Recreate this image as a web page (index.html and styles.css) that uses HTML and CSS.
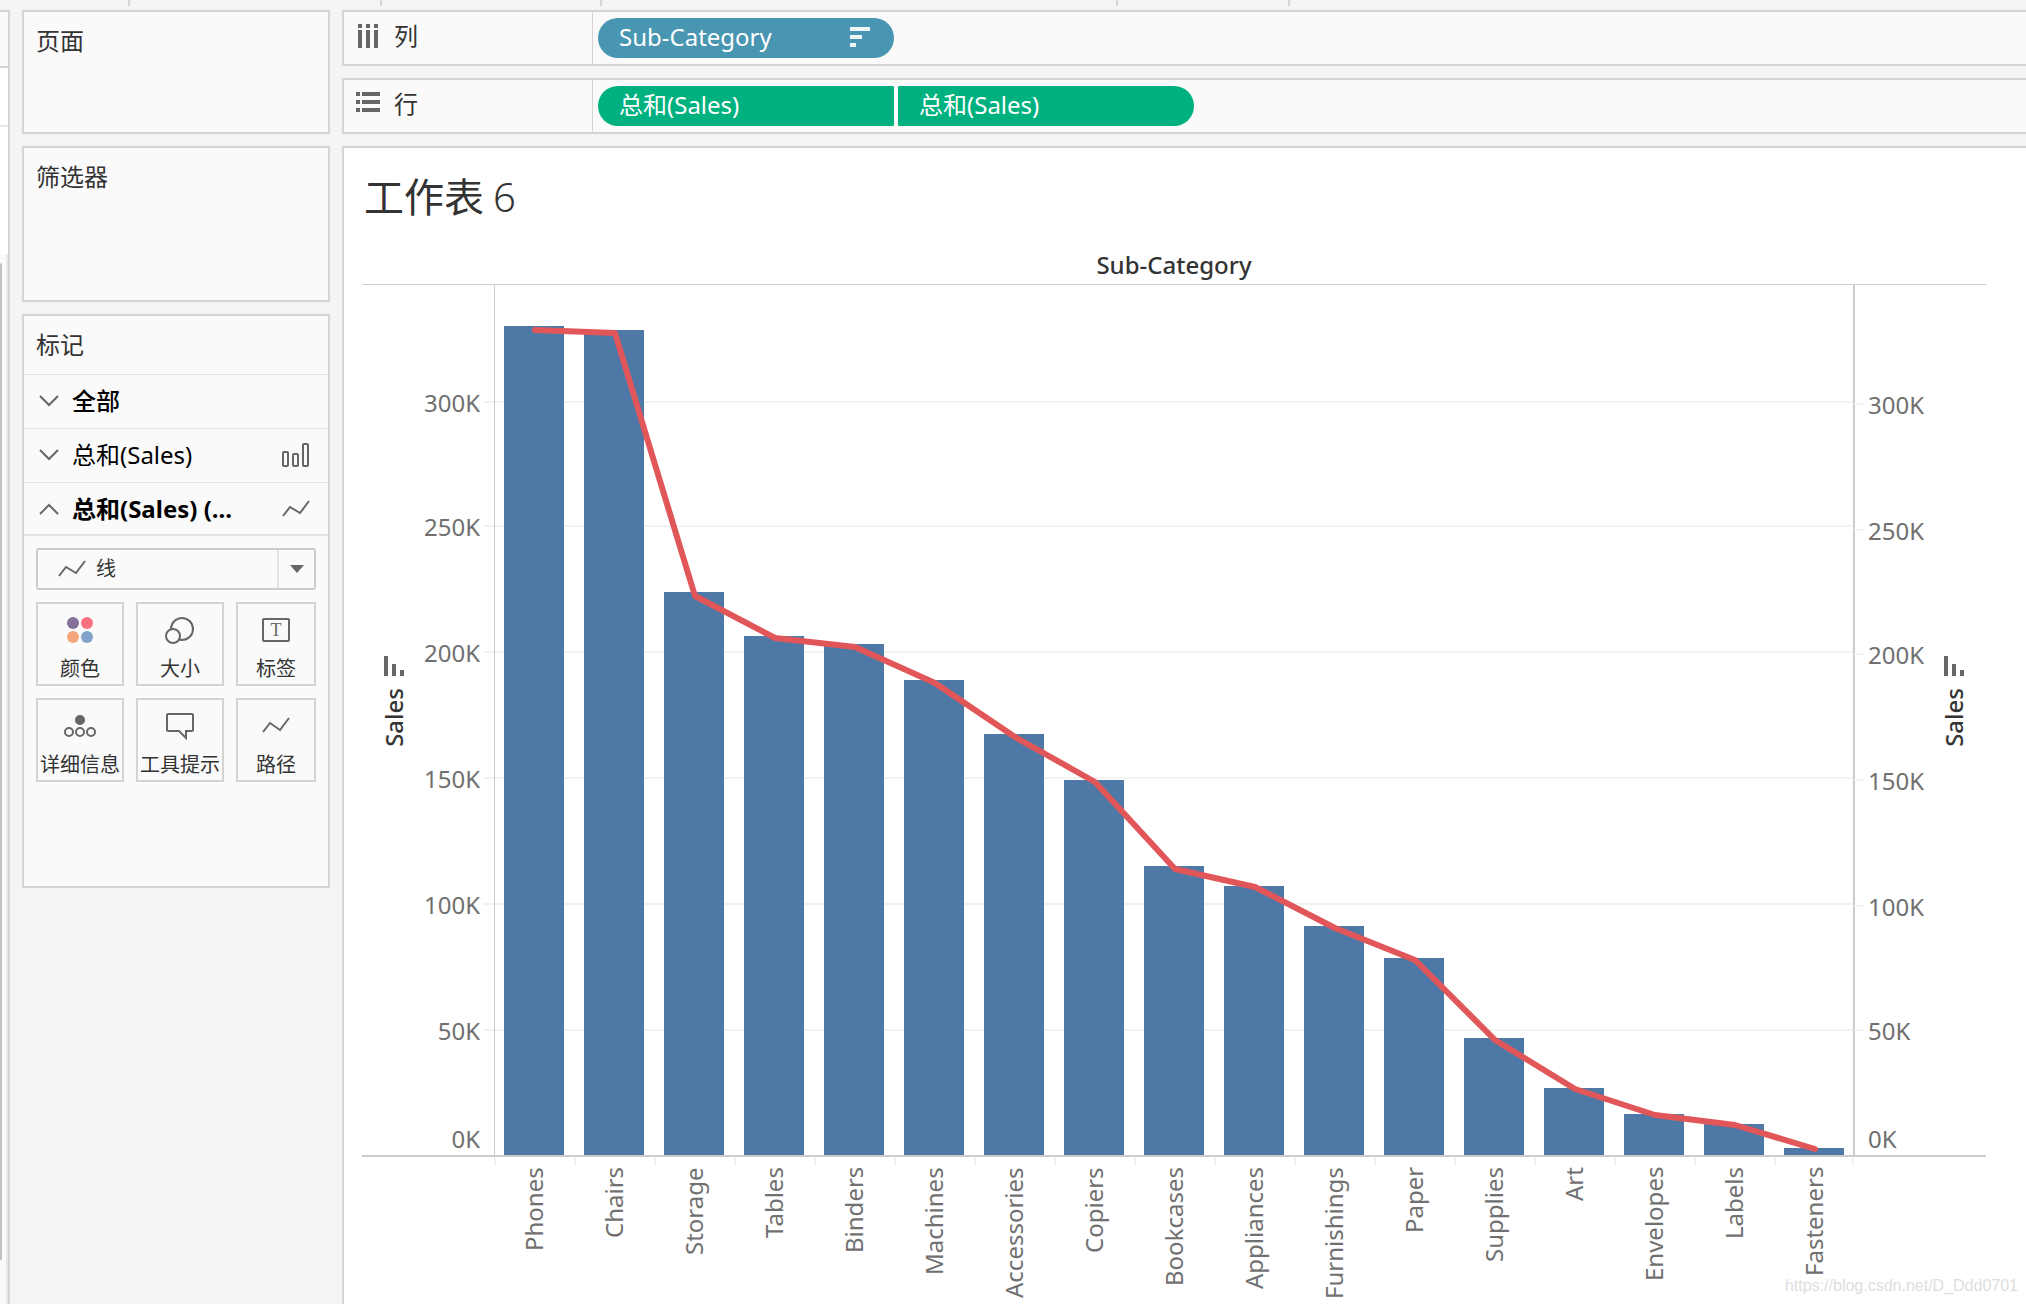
FILE: index.html
```html
<!DOCTYPE html>
<html lang="zh-CN">
<head>
<meta charset="utf-8">
<meta name="viewport" content="width=device-width, initial-scale=1">
<title>工作表 6</title>
<link rel="stylesheet" href="styles.css">
</head>
<body>
<svg class="defs" aria-hidden="true">
  <symbol id="zigzag" viewBox="0 0 28 18"><path d="M1 16 L8 7 L18 13 L27 1" fill="none" stroke="#666" stroke-width="2"/></symbol>
  <symbol id="down" viewBox="0 0 20 12"><path d="M1 1 L10 10 L19 1" fill="none" stroke="#666" stroke-width="2"/></symbol>
  <symbol id="up" viewBox="0 0 20 12"><path d="M1 11 L10 2 L19 11" fill="none" stroke="#666" stroke-width="2"/></symbol>
  <symbol id="sorted" viewBox="0 0 20 20"><path d="M0 0h4v20H0zM8 8h4v12H8zM16 14h4v6h-4z" fill="#666"/></symbol>
</svg>
<div class="app">
  <aside class="rail">
    <div class="rail-head"></div>
    <div class="rail-search"></div>
    <div class="rail-space"></div>
    <div class="rail-scroll"><div class="rail-thumb"></div></div>
  </aside>
  <div class="work">
    <div class="ruler"><i></i><i></i><i></i><i></i><i></i></div>
    <div class="columns">
      <aside class="cards">
        <section class="card pages"><h2>页面</h2></section>
        <section class="card filters"><h2>筛选器</h2></section>
        <section class="card marks">
          <h2>标记</h2>
          <button class="mark-row" type="button"><svg class="chev"><use href="#down"/></svg><span class="mark-name all">全部</span></button>
          <button class="mark-row" type="button"><svg class="chev"><use href="#down"/></svg><span class="mark-name">总和(Sales)</span><svg class="mark-icon" viewBox="0 0 28 24"><g fill="none" stroke="#666" stroke-width="2"><rect x="1" y="9" width="5" height="14" rx="1"/><rect x="11" y="11" width="5" height="12" rx="1"/><rect x="21" y="1" width="5" height="22" rx="1"/></g></svg></button>
          <button class="mark-row open" type="button"><svg class="chev"><use href="#up"/></svg><span class="mark-name bold">总和(Sales) (...</span><svg class="mark-icon zig"><use href="#zigzag"/></svg></button>
          <label class="type">
            <svg class="zig"><use href="#zigzag"/></svg>
            <select aria-label="标记类型"><option>线</option></select>
            <span class="type-arrow"><svg viewBox="0 0 14 8"><path d="M0 0h14L7 8z" fill="#666"/></svg></span>
          </label>
          <div class="tiles">
            <button type="button"><svg viewBox="0 0 32 28"><circle cx="9" cy="7" r="6" fill="#85709a"/><circle cx="23" cy="7" r="6" fill="#f7707f"/><circle cx="9" cy="21" r="6" fill="#f3a67c"/><circle cx="23" cy="21" r="6" fill="#82a4cb"/></svg>颜色</button>
            <button type="button"><svg viewBox="0 0 32 28"><g fill="#fafafa" stroke="#666" stroke-width="2"><circle cx="18" cy="13" r="11"/><circle cx="9" cy="20" r="7"/></g></svg>大小</button>
            <button type="button"><svg viewBox="0 0 32 28"><rect x="3" y="3" width="26" height="22" rx="1" fill="none" stroke="#666" stroke-width="2"/><text class="icon-text" x="16" y="20" text-anchor="middle">T</text></svg>标签</button>
            <button type="button"><svg viewBox="0 0 32 28"><circle cx="16" cy="8" r="5" fill="#666"/><g fill="none" stroke="#666" stroke-width="2"><circle cx="5" cy="20" r="4"/><circle cx="16" cy="20" r="4"/><circle cx="27" cy="20" r="4"/></g></svg>详细信息</button>
            <button type="button"><svg viewBox="0 0 32 28"><path d="M4 2h24q1 0 1 1v15q0 1-1 1h-6v7l-7-7H4q-1 0-1-1V3q0-1 1-1z" fill="none" stroke="#666" stroke-width="2"/></svg>工具提示</button>
            <button type="button"><svg viewBox="0 0 32 28"><path d="M3 20L10 11L20 18L29 6" fill="none" stroke="#666" stroke-width="2"/></svg>路径</button>
          </div>
        </section>
      </aside>
      <main class="main">
        <section class="shelf">
          <h2><svg viewBox="0 0 24 24"><path d="M2 0h4v4H2zM10 0h4v4h-4zM18 0h4v4h-4zM2 6h4v18H2zM10 6h4v18h-4zM18 6h4v18h-4z" fill="#666"/></svg>列</h2>
          <div class="pills">
            <button class="pill dim" type="button">Sub-Category<svg viewBox="0 0 20 20"><path d="M0 0h20v4H0zM0 8h12v4H0zM0 16h6v4H0z" fill="#fff" fill-opacity=".9"/></svg></button>
          </div>
        </section>
        <section class="shelf">
          <h2><svg viewBox="0 0 24 24"><path d="M0 0h4v4H0zM0 8h4v4H0zM0 16h4v4H0zM6 0h18v4H6zM6 8h18v4H6zM6 16h18v4H6z" fill="#666"/></svg>行</h2>
          <div class="pills">
            <button class="pill first" type="button">总和(Sales)</button>
            <button class="pill last" type="button">总和(Sales)</button>
          </div>
        </section>
        <section class="sheet">
          <h1>工作表 <span>6</span></h1>
          <div class="chart">
            <div class="chart-head">Sub-Category</div>
            <div class="axis left">
              <div class="axis-title"><svg><use href="#sorted"/></svg><span>Sales</span></div>
              <ol class="ticks"><li><span>300K</span></li><li><span>250K</span></li><li><span>200K</span></li><li><span>150K</span></li><li><span>100K</span></li><li><span>50K</span></li><li><span>0K</span></li></ol>
            </div>
            <div class="gridlines"><i></i><i></i><i></i><i></i><i></i><i></i></div>
            <div class="bars"></div>
            <svg class="line" viewBox="0 0 1360 870" preserveAspectRatio="none"><polyline points="41,45 121,48 201,311 281,353 361,362 441,398 521,452 601,497 681,584 761,602 841,643 921,675 1001,755 1081,804 1161,830 1241,840 1321,864"/></svg>
            <div class="axis right">
              <ol class="ticks"><li><span>300K</span></li><li><span>250K</span></li><li><span>200K</span></li><li><span>150K</span></li><li><span>100K</span></li><li><span>50K</span></li><li><span>0K</span></li></ol>
              <div class="axis-title"><svg><use href="#sorted"/></svg><span>Sales</span></div>
            </div>
            <div class="base"></div>
            <div class="cats"></div>
          </div>
        </section>
      </main>
    </div>
  </div>
  <div class="watermark">https://blog.csdn.net/D_Ddd0701</div>
</div>
<script src="chart.js"></script>
</body>
</html>
```
FILE: styles.css
```css
* { box-sizing: border-box; }
body { margin: 0; background: #f4f4f4; color: #333; font: 24px/36px "Noto Sans", "Noto Sans CJK SC", sans-serif; }
h1, h2, ol { margin: 0; padding: 0; list-style: none; }
h2 { font-size: 24px; font-weight: 400; }
button, select { font: inherit; color: inherit; margin: 0; padding: 0; border: 0; background: none; }
svg { display: block; flex: none; }
.defs { position: absolute; width: 0; height: 0; }
.app { position: relative; display: flex; min-height: 100vh; overflow: hidden; }

.rail { flex: none; width: 10px; margin-top: 10px; display: flex; flex-direction: column; border-top: 2px solid #d4d4d4; border-right: 2px solid #d4d4d4; background: #fff; }
.rail-head { height: 56px; background: #fafafa; border-bottom: 2px solid #d4d4d4; }
.rail-search { height: 59px; border-bottom: 2px solid #e8e8e8; }
.rail-space { height: 127px; }
.rail-scroll { flex: 1; padding: 9px 0 44px; background: #fafafa; border-right: 2px solid #e8e8e8; }
.rail-thumb { width: 2px; height: 100%; background: #c1c1c1; border-radius: 0 2px 0 0; }

.work { flex: 1; min-width: 0; display: flex; flex-direction: column; padding-left: 12px; }
.ruler { height: 10px; display: flex; }
.ruler i { height: 6px; border-right: 2px solid #d4d4d4; }
.ruler i:nth-child(1) { width: 108px; }
.ruler i:nth-child(2) { width: 252px; }
.ruler i:nth-child(3) { width: 220px; }
.ruler i:nth-child(4) { width: 516px; }
.ruler i:nth-child(5) { width: 172px; }
.columns { flex: 1; display: flex; gap: 12px; }

.cards { flex: none; width: 308px; display: flex; flex-direction: column; gap: 12px; }
.card { background: #fafafa; border: 2px solid #d4d4d4; }
.card h2 { padding: 12px; line-height: 34px; }
.pages { height: 124px; }
.filters { height: 156px; }
.marks { height: 574px; }
.mark-row { display: flex; align-items: center; width: 304px; height: 54px; padding: 0 18px 2px 15px; border-top: 1px solid #e4e4e4; text-align: left; color: #000; }
.mark-row.open { padding-bottom: 0; border-bottom: 2px solid #e4e4e4; }
.chev { width: 20px; height: 12px; margin-right: 13px; }
.mark-name { flex: 1; white-space: nowrap; }
.all { font-weight: 500; }
.bold { font-weight: 700; }
.mark-icon { width: 28px; height: 24px; }
.zig { width: 28px; height: 18px; }
.type { display: flex; align-items: center; height: 42px; margin: 12px; padding-left: 20px; border: 2px solid #ccc; border-radius: 3px; font-size: 20px; }
.type select { flex: 1; appearance: none; margin-left: 10px; }
.type-arrow { display: flex; align-items: center; justify-content: center; width: 37px; height: 38px; border-left: 2px solid #e4e4e4; }
.type-arrow svg { width: 14px; height: 8px; }
.tiles { display: grid; grid-template-columns: 88fr 88fr 80fr; gap: 12px; margin: 0 12px; }
.tiles button { display: flex; flex-direction: column; align-items: center; gap: 10px; height: 84px; padding-top: 12px; border: 2px solid #d4d4d4; font-size: 20px; line-height: 30px; white-space: nowrap; }
.tiles svg { width: 32px; height: 28px; }
.icon-text { font: 18px "Liberation Serif", serif; fill: #666; }

.main { flex: 1; min-width: 0; display: flex; flex-direction: column; gap: 12px; }
.shelf { display: flex; height: 56px; background: #fafafa; border: 2px solid #d4d4d4; border-right: 0; }
.shelf h2 { display: flex; align-items: center; gap: 14px; width: 249px; padding: 0 0 4px 12px; border-right: 1px solid #d4d4d4; line-height: 28px; }
.shelf h2 svg { width: 24px; height: 24px; }
.pills { display: flex; align-items: center; gap: 4px; padding-left: 5px; }
.pill { display: flex; align-items: center; justify-content: space-between; width: 296px; height: 40px; padding: 0 24px 2px 21px; color: #fff; background: #00b180; text-align: left; }
.pill svg { width: 20px; height: 20px; }
.dim { background: #4996b2; border-radius: 20px; }
.first { border-radius: 20px 1px 1px 20px; box-shadow: 4px 0 #fff; }
.last { border-radius: 1px 20px 20px 1px; }

.sheet { flex: 1; display: flex; flex-direction: column; padding: 20px 40px 0 18px; background: #fff; border: 2px solid #d4d4d4; border-width: 2px 0 0 2px; }
h1 { height: 58px; padding-left: 2px; font: 400 40px/54px "Noto Sans CJK SC", sans-serif; }
h1 span { font-family: "Noto Sans", sans-serif; font-weight: 300; }
.chart { flex: 1; display: grid; grid-template-columns: 132px 1fr 132px; grid-template-rows: 59px minmax(400px, 1fr) 2px 147px; }
.chart-head { grid-area: 1 / 1 / 2 / 4; padding-top: 21px; border-bottom: 1px solid #ccc; text-align: center; font-weight: 500; }
.axis { grid-row: 2; display: flex; justify-content: space-between; color: #707070; }
.left { grid-column: 1; padding-left: 20px; }
.right { grid-column: 3; padding-right: 20px; }
.axis-title { align-self: center; display: flex; flex-direction: column; align-items: center; gap: 12px; width: 24px; padding-bottom: 38px; color: #333; font-weight: 500; }
.axis-title svg { width: 20px; height: 20px; }
.axis-title span { writing-mode: vertical-rl; transform: rotate(180deg); line-height: 24px; }
.ticks, .gridlines { display: grid; grid-template-rows: 118fr 124fr repeat(4, 126fr) 124fr; }
.ticks li { display: flex; align-items: flex-end; gap: 4px; }
.ticks span { line-height: 28px; margin-bottom: -14px; }
.ticks li:last-child span { margin-bottom: 2px; }
.left li:not(:last-child)::after, .right li:not(:last-child)::before { content: ""; width: 10px; height: 2px; background: #f2f2f2; }
.left li { justify-content: flex-end; }
.left li:last-child { padding-right: 14px; }
.right .ticks { grid-template-rows: 120fr 126fr 124fr 126fr 126fr 124fr 124fr; }
.right li:last-child { padding-left: 14px; }
.gridlines { grid-area: 2 / 2; border-left: 1px solid #ccc; border-right: 2px solid #ccc; margin-right: -1px; }
.gridlines i { border-bottom: 2px solid #f2f2f2; }
.bars { grid-area: 2 / 2; display: grid; grid-template-columns: repeat(17, 1fr); align-items: end; }
.bars i { margin: 0 10px; background: #4e79a7; }
.line { grid-area: 2 / 2; width: 100%; height: 100%; overflow: visible; fill: none; stroke: #e15759; stroke-width: 6px; stroke-linejoin: round; stroke-linecap: round; }
.base { grid-area: 3 / 1 / 4 / 4; background: #ccc; }
.cats { grid-area: 4 / 2; display: grid; grid-template-columns: repeat(17, 1fr); padding-top: 1px; color: #707070; }
.cats span { display: flex; justify-content: center; height: 146px; padding-top: 9px; background: linear-gradient(#f2f2f2, #f2f2f2) 0 0 / 2px 8px no-repeat; }
.cats span:last-child { background: linear-gradient(#f2f2f2, #f2f2f2) 0 0 / 2px 8px no-repeat, linear-gradient(#f2f2f2, #f2f2f2) 100% 0 / 2px 8px no-repeat; }
.cats b { writing-mode: vertical-rl; transform: rotate(180deg); text-align: right; font-weight: 400; line-height: 32px; }
.watermark { position: absolute; right: 8px; bottom: 4px; font: 16px/28px "Liberation Sans", sans-serif; color: #dedede; }
```
FILE: chart.js
```js
// Bar heights are given on a plot 870 units high.
const rows = [
  ["Phones", 829], ["Chairs", 825], ["Storage", 563], ["Tables", 519],
  ["Binders", 511], ["Machines", 475], ["Accessories", 421], ["Copiers", 375],
  ["Bookcases", 289], ["Appliances", 269], ["Furnishings", 229], ["Paper", 197],
  ["Supplies", 117], ["Art", 67], ["Envelopes", 41], ["Labels", 31], ["Fasteners", 7]
];
document.querySelector(".bars").innerHTML =
  rows.map(([, v]) => `<i style="height:${(v / 870 * 100).toFixed(3)}%"></i>`).join("");
document.querySelector(".cats").innerHTML =
  rows.map(([name]) => `<span><b>${name}</b></span>`).join("");
```
